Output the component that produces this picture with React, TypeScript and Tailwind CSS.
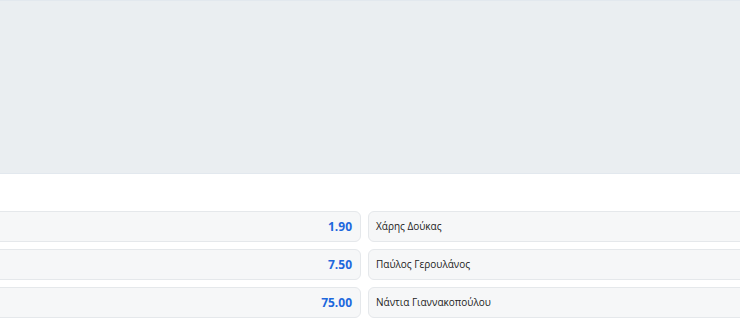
import React from 'react';

const rows = [
  { odds: '1.90', name: 'Χάρης Δούκας' },
  { odds: '7.50', name: 'Παύλος Γερουλάνος' },
  { odds: '75.00', name: 'Νάντια Γιαννακοπούλου' },
];

const App = () => {
  return (
    <section className="w-[740px] h-[326px] overflow-hidden bg-white font-['Open_Sans',sans-serif]">
      {/* Top banner area */}
      <div className="h-[174px] bg-[#eaeef1] border-y border-[#e2e8ee]" />

      {/* Odds rows */}
      <div className="mt-[37px] -ml-[12px] flex flex-col gap-[7px]">
        {rows.map((r) => (
          <div key={r.name} className="flex gap-[7px] h-[31px]">
            <div className="w-[373px] shrink-0 flex items-center justify-end pr-[8px] rounded-md border border-[#e5e8eb] bg-[#f6f7f8]">
              <span className="text-[12px] font-bold text-[#1d68dd]">{r.odds}</span>
            </div>
            <div className="w-[420px] shrink-0 flex items-center pl-[7px] rounded-md border border-[#e5e8eb] bg-[#f6f7f8]">
              <span className="text-[10px] font-medium text-[#222]">{r.name}</span>
            </div>
          </div>
        ))}
      </div>
    </section>
  );
};

export default App;
